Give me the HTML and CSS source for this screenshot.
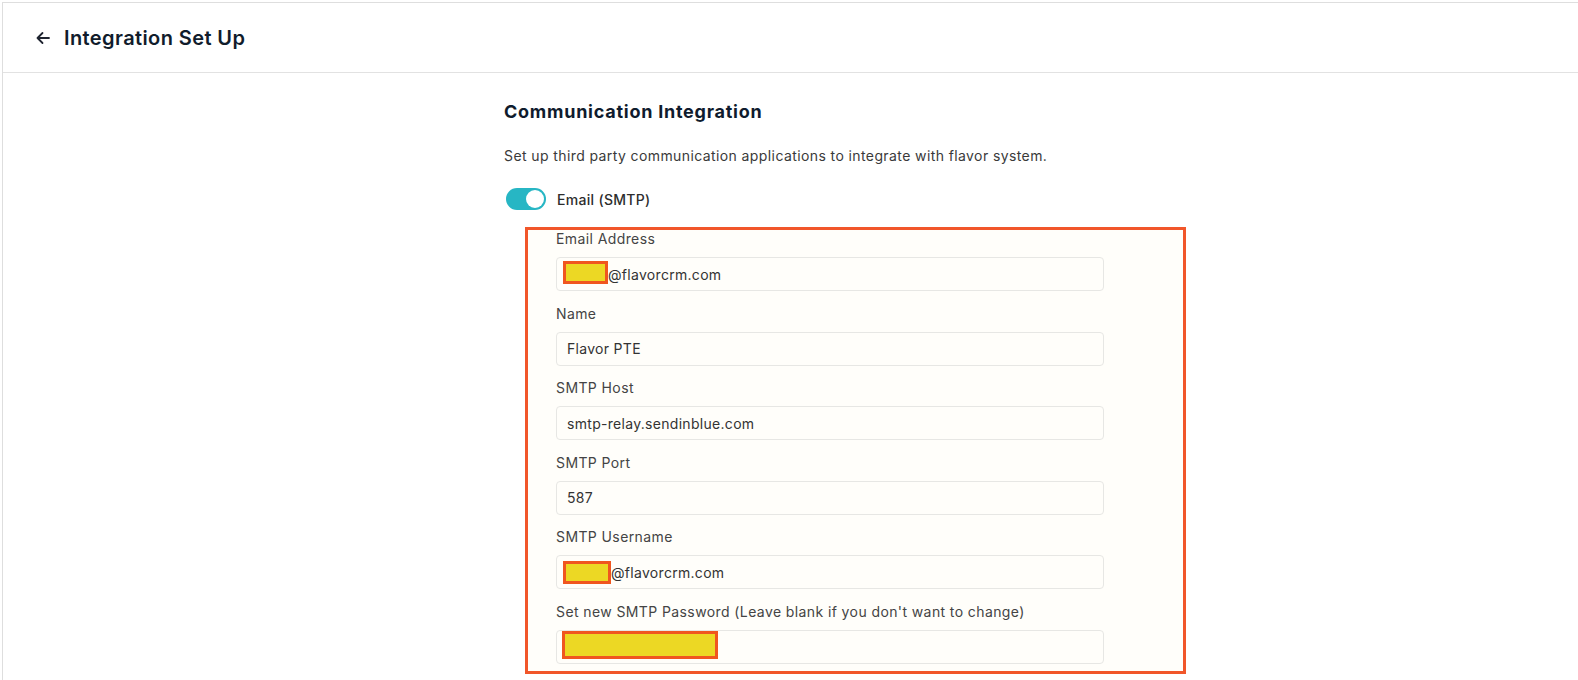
FILE: index.html
```html
<!DOCTYPE html>
<html lang="en">
<head>
  <meta charset="UTF-8">
  <meta name="viewport" content="width=device-width, initial-scale=1.0">
  <title>Integration Set Up</title>
  <link rel="stylesheet" href="styles.css">
</head>
<body>
  <div class="page">
    <div class="page-header">
      <svg class="back-icon" width="16" height="16" viewBox="0 0 16 16">
        <path d="M14 8H2.5M7.5 3L2.5 8l5 5" fill="none" stroke="#1f2430" stroke-width="1.8" stroke-linecap="round" stroke-linejoin="round"/>
      </svg>
      <h1>Integration Set Up</h1>
    </div>

    <div class="content">
      <h2>Communication Integration</h2>
      <p class="desc">Set up third party communication applications to integrate with flavor system.</p>

      <div class="toggle-row">
        <span class="toggle"><span class="knob"></span></span>
        <span class="toggle-label">Email (SMTP)</span>
      </div>

      <div class="form-box">
        <div class="field">
          <label>Email Address</label>
          <div class="input"><span class="redact redact-sm"></span>@flavorcrm.com</div>
        </div>
        <div class="field">
          <label>Name</label>
          <div class="input">Flavor PTE</div>
        </div>
        <div class="field">
          <label>SMTP Host</label>
          <div class="input">smtp-relay.sendinblue.com</div>
        </div>
        <div class="field">
          <label>SMTP Port</label>
          <div class="input">587</div>
        </div>
        <div class="field">
          <label>SMTP Username</label>
          <div class="input"><span class="redact redact-md"></span>@flavorcrm.com</div>
        </div>
        <div class="field">
          <label>Set new SMTP Password (Leave blank if you don't want to change)</label>
          <div class="input"><span class="redact redact-lg"></span></div>
        </div>
      </div>
    </div>
  </div>
</body>
</html>
```

FILE: styles.css
```css
body {
    margin: 0;
    font-family: Inter, "Open Sans", sans-serif;
    background: #ffffff;
    color: #333;
}
.page {
    margin: 2px 0 0 2px;
    border-top: 1px solid #dedede;
    border-left: 1px solid #dedede;
    height: 677px;
    overflow: hidden;
}
.page-header {
    height: 69px;
    display: flex;
    align-items: center;
    padding-left: 32px;
    border-bottom: 1px solid #e2e2e2;
}
.back-icon {
    margin-right: 13px;
}
.page-header h1 {
    margin: 0;
    font-size: 20px;
    font-weight: 600;
    letter-spacing: 0.4px;
    color: #111c2c;
}
.content {
    padding-left: 501px;
}
.content h2 {
    margin: 0;
    padding-top: 28px;
    font-size: 18px;
    font-weight: 700;
    letter-spacing: 0.75px;
    line-height: 22px;
    color: #0f1b2d;
}
.desc {
    margin: 24px 0 0;
    font-size: 14px;
    letter-spacing: 0.4px;
    line-height: 18px;
    color: #3a3a3a;
}
.toggle-row {
    display: flex;
    align-items: center;
    margin-top: 23px;
    margin-left: 2px;
}
.toggle {
    width: 40px;
    height: 22px;
    border-radius: 11px;
    background: #27b6c4;
    position: relative;
}
.knob {
    position: absolute;
    right: 2px;
    top: 2px;
    width: 18px;
    height: 18px;
    border-radius: 50%;
    background: #fff;
}
.toggle-label {
    margin-left: 11px;
    font-size: 14px;
    font-weight: 500;
    letter-spacing: 0.3px;
    color: #2d2d2d;
}
.form-box {
    margin-top: 17px;
    margin-left: 21px;
    width: 627px;
    border: 3px solid #f1562a;
    background: #fffefa;
    padding: 0 0 7px 28px;
}
.field {
    width: 548px;
}
.field + .field {
    margin-top: 13.5px;
}
.field label {
    display: block;
    font-size: 14px;
    letter-spacing: 0.4px;
    line-height: 18px;
    color: #444;
    margin-bottom: 9px;
}
.input {
    height: 34px;
    box-sizing: border-box;
    border: 1px solid #e7e7e4;
    border-radius: 4px;
    background: #fffefa;
    padding-left: 10px;
    display: flex;
    align-items: center;
    font-size: 14px;
    letter-spacing: 0.3px;
    color: #333;
}
.redact {
    display: inline-block;
    box-sizing: border-box;
    border: 3px solid #f0561f;
    background: #ecd824;
    margin-left: -4px;
}
.redact-sm {
    width: 45px;
    height: 23px;
    margin-top: -3px;
}
.redact-md {
    width: 48px;
    height: 23px;
}
.redact-lg {
    align-self: flex-start;
    width: 156px;
    height: 28px;
    margin-left: -5px;
}
```
